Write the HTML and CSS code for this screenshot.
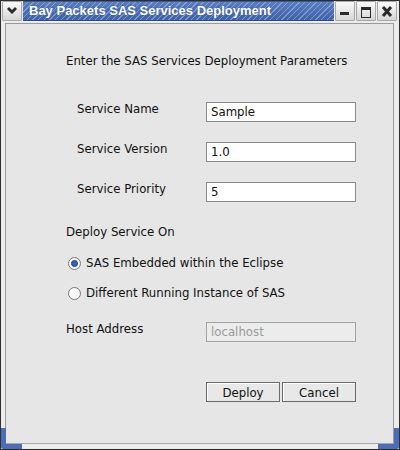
FILE: index.html
```html
<!DOCTYPE html>
<html>
<head>
<meta charset="utf-8">
<link rel="stylesheet" href="styles.css">
</head>
<body>
<div class="window">
  <div class="titlebar">
    <div class="tbtn">
      <svg width="20" height="20" viewBox="0 0 20 20"><path d="M5 8 L7 6 L10 9 L13 6 L15 8 L10 13 Z" fill="#2a2a2a"/></svg>
    </div>
    <div class="title">Bay Packets SAS Services Deployment</div>
    <div class="tbtn">
      <svg width="20" height="20" viewBox="0 0 20 20"><rect x="5" y="11" width="9" height="3" fill="#2a2a2a"/></svg>
    </div>
    <div class="tbtn">
      <svg width="20" height="20" viewBox="0 0 20 20"><rect x="5.5" y="6.5" width="9" height="10" fill="none" stroke="#2a2a2a" stroke-width="1"/><rect x="5" y="6" width="10" height="3" fill="#2a2a2a"/></svg>
    </div>
    <div class="tbtn">
      <svg width="20" height="20" viewBox="0 0 20 20"><path d="M6 6 L14 15 M14 6 L6 15" stroke="#2a2a2a" stroke-width="3"/></svg>
    </div>
  </div>
  <div class="client">
    <p class="heading">Enter the SAS Services Deployment Parameters</p>
    <div class="fields">
      <div class="row"><span class="label">Service Name</span><div class="field">Sample</div></div>
      <div class="row"><span class="label">Service Version</span><div class="field">1.0</div></div>
      <div class="row"><span class="label">Service Priority</span><div class="field">5</div></div>
    </div>
    <p class="section">Deploy Service On</p>
    <div class="radio first"><span class="dot checked"></span><span>SAS Embedded within the Eclipse</span></div>
    <div class="radio"><span class="dot"></span><span>Different Running Instance of SAS</span></div>
    <div class="row host"><span class="label">Host Address</span><div class="field disabled">localhost</div></div>
    <div class="buttons"><div class="btn">Deploy</div><div class="btn">Cancel</div></div>
  </div>
  <span class="corner left"></span>
  <span class="corner right"></span>
</div>
</body>
</html>
```
FILE: styles.css
```css
html, body { margin: 0; padding: 0; background: #ffffff; }
body { font-family: "DejaVu Sans", sans-serif; font-size: 11.75px; color: #111; }

.window {
  position: relative;
  width: 400px;
  height: 450px;
  box-sizing: border-box;
  border: 1px solid #2e2e2e;
  background: #ececec;
  padding: 0 5px 5px 4px;
  display: flex;
  flex-direction: column;
}

.titlebar {
  display: flex;
  gap: 1px;
  height: 20px;
  margin: 0 -4px 0 -3px;
  padding: 0 1px 0 0;
}
.tbtn {
  flex: 0 0 20px;
  width: 20px;
  height: 20px;
  box-sizing: border-box;
  border: 1px solid #a8a8a8;
  border-radius: 1px;
  background: linear-gradient(#fafafa, #d6d6d6);
  display: flex;
  align-items: center;
  justify-content: center;
  overflow: visible;
}
.tbtn svg { display: block; flex: 0 0 20px; margin: -1px; }
.title {
  flex: 1 1 auto;
  min-width: 0;
  height: 20px;
  box-sizing: border-box;
  border-top: 1px solid #3a5a98;
  border-bottom: 1px solid #2f4d88;
  background:
    repeating-linear-gradient(135deg, rgba(255,255,255,0) 0 3px, rgba(170,190,230,0.55) 3px 4px),
    linear-gradient(#5a7cc0, #3f62a8);
  color: #fff;
  font-family: "Liberation Sans", sans-serif;
  font-weight: bold;
  font-size: 13px;
  line-height: 18px;
  padding-left: 6px;
  white-space: nowrap;
  overflow: hidden;
  text-shadow: 0 0 2px #2f4d88;
}

.client {
  flex: 1;
  margin-top: 2px;
  border: 1px solid #9a9a9a;
  border-bottom-color: #a8a8a8;
  background: #e6e6e6;
  padding-left: 60px;
}

.heading { margin: 30px 0 0 0; line-height: 14px; }

.fields { margin-top: 34px; padding-left: 11px; display: flex; flex-direction: column; gap: 20px; }
.row { display: grid; grid-template-columns: 129px 150px; align-items: start; }
.row .label { line-height: 14px; }
.field {
  height: 20px;
  box-sizing: border-box;
  border: 1px solid #8a8a8a;
  background: #fff;
  padding-left: 4px;
  line-height: 18px;
}
.field.disabled { background: #ececec; border-color: #a4a4a4; color: #9a9a9a; }

.section { margin: 23px 0 0 0; line-height: 14px; }

.radio { display: flex; align-items: center; gap: 5px; line-height: 14px; margin-top: 16px; padding-left: 2px; }
.radio.first { margin-top: 17px; }
.dot {
  width: 13px; height: 13px; box-sizing: border-box;
  border: 1px solid #7a7a7a; border-radius: 50%;
  background: radial-gradient(circle at 40% 35%, #ffffff, #f0f0f0);
  position: relative;
}
.dot.checked::after {
  content: "";
  position: absolute;
  left: 2px; top: 2px;
  width: 7px; height: 7px;
  box-sizing: border-box;
  border-radius: 50%;
  border: 1px solid #1e3a78;
  background: #3a62b8;
}

.host { margin-top: 22px; grid-template-columns: 140px 150px; }

.buttons { margin-top: 40px; margin-left: 140px; display: flex; gap: 2px; }
.btn {
  width: 74px; height: 20px; box-sizing: border-box;
  border: 1px solid #6a6a6a;
  background: #e8e8e8;
  box-shadow: inset 1px 1px 0 #ffffff;
  text-align: center;
  line-height: 14px;
  padding-top: 3px;
  overflow: hidden;
}

.corner { position: absolute; bottom: 0; width: 21px; height: 21px; box-sizing: border-box; border-bottom: 5px solid #4a6db5; }
.corner.left { left: 0; border-left: 5px solid #4a6db5; border-bottom-left-radius: 3px; }
.corner.right { right: 0; border-right: 5px solid #4a6db5; border-bottom-right-radius: 3px; }
```
